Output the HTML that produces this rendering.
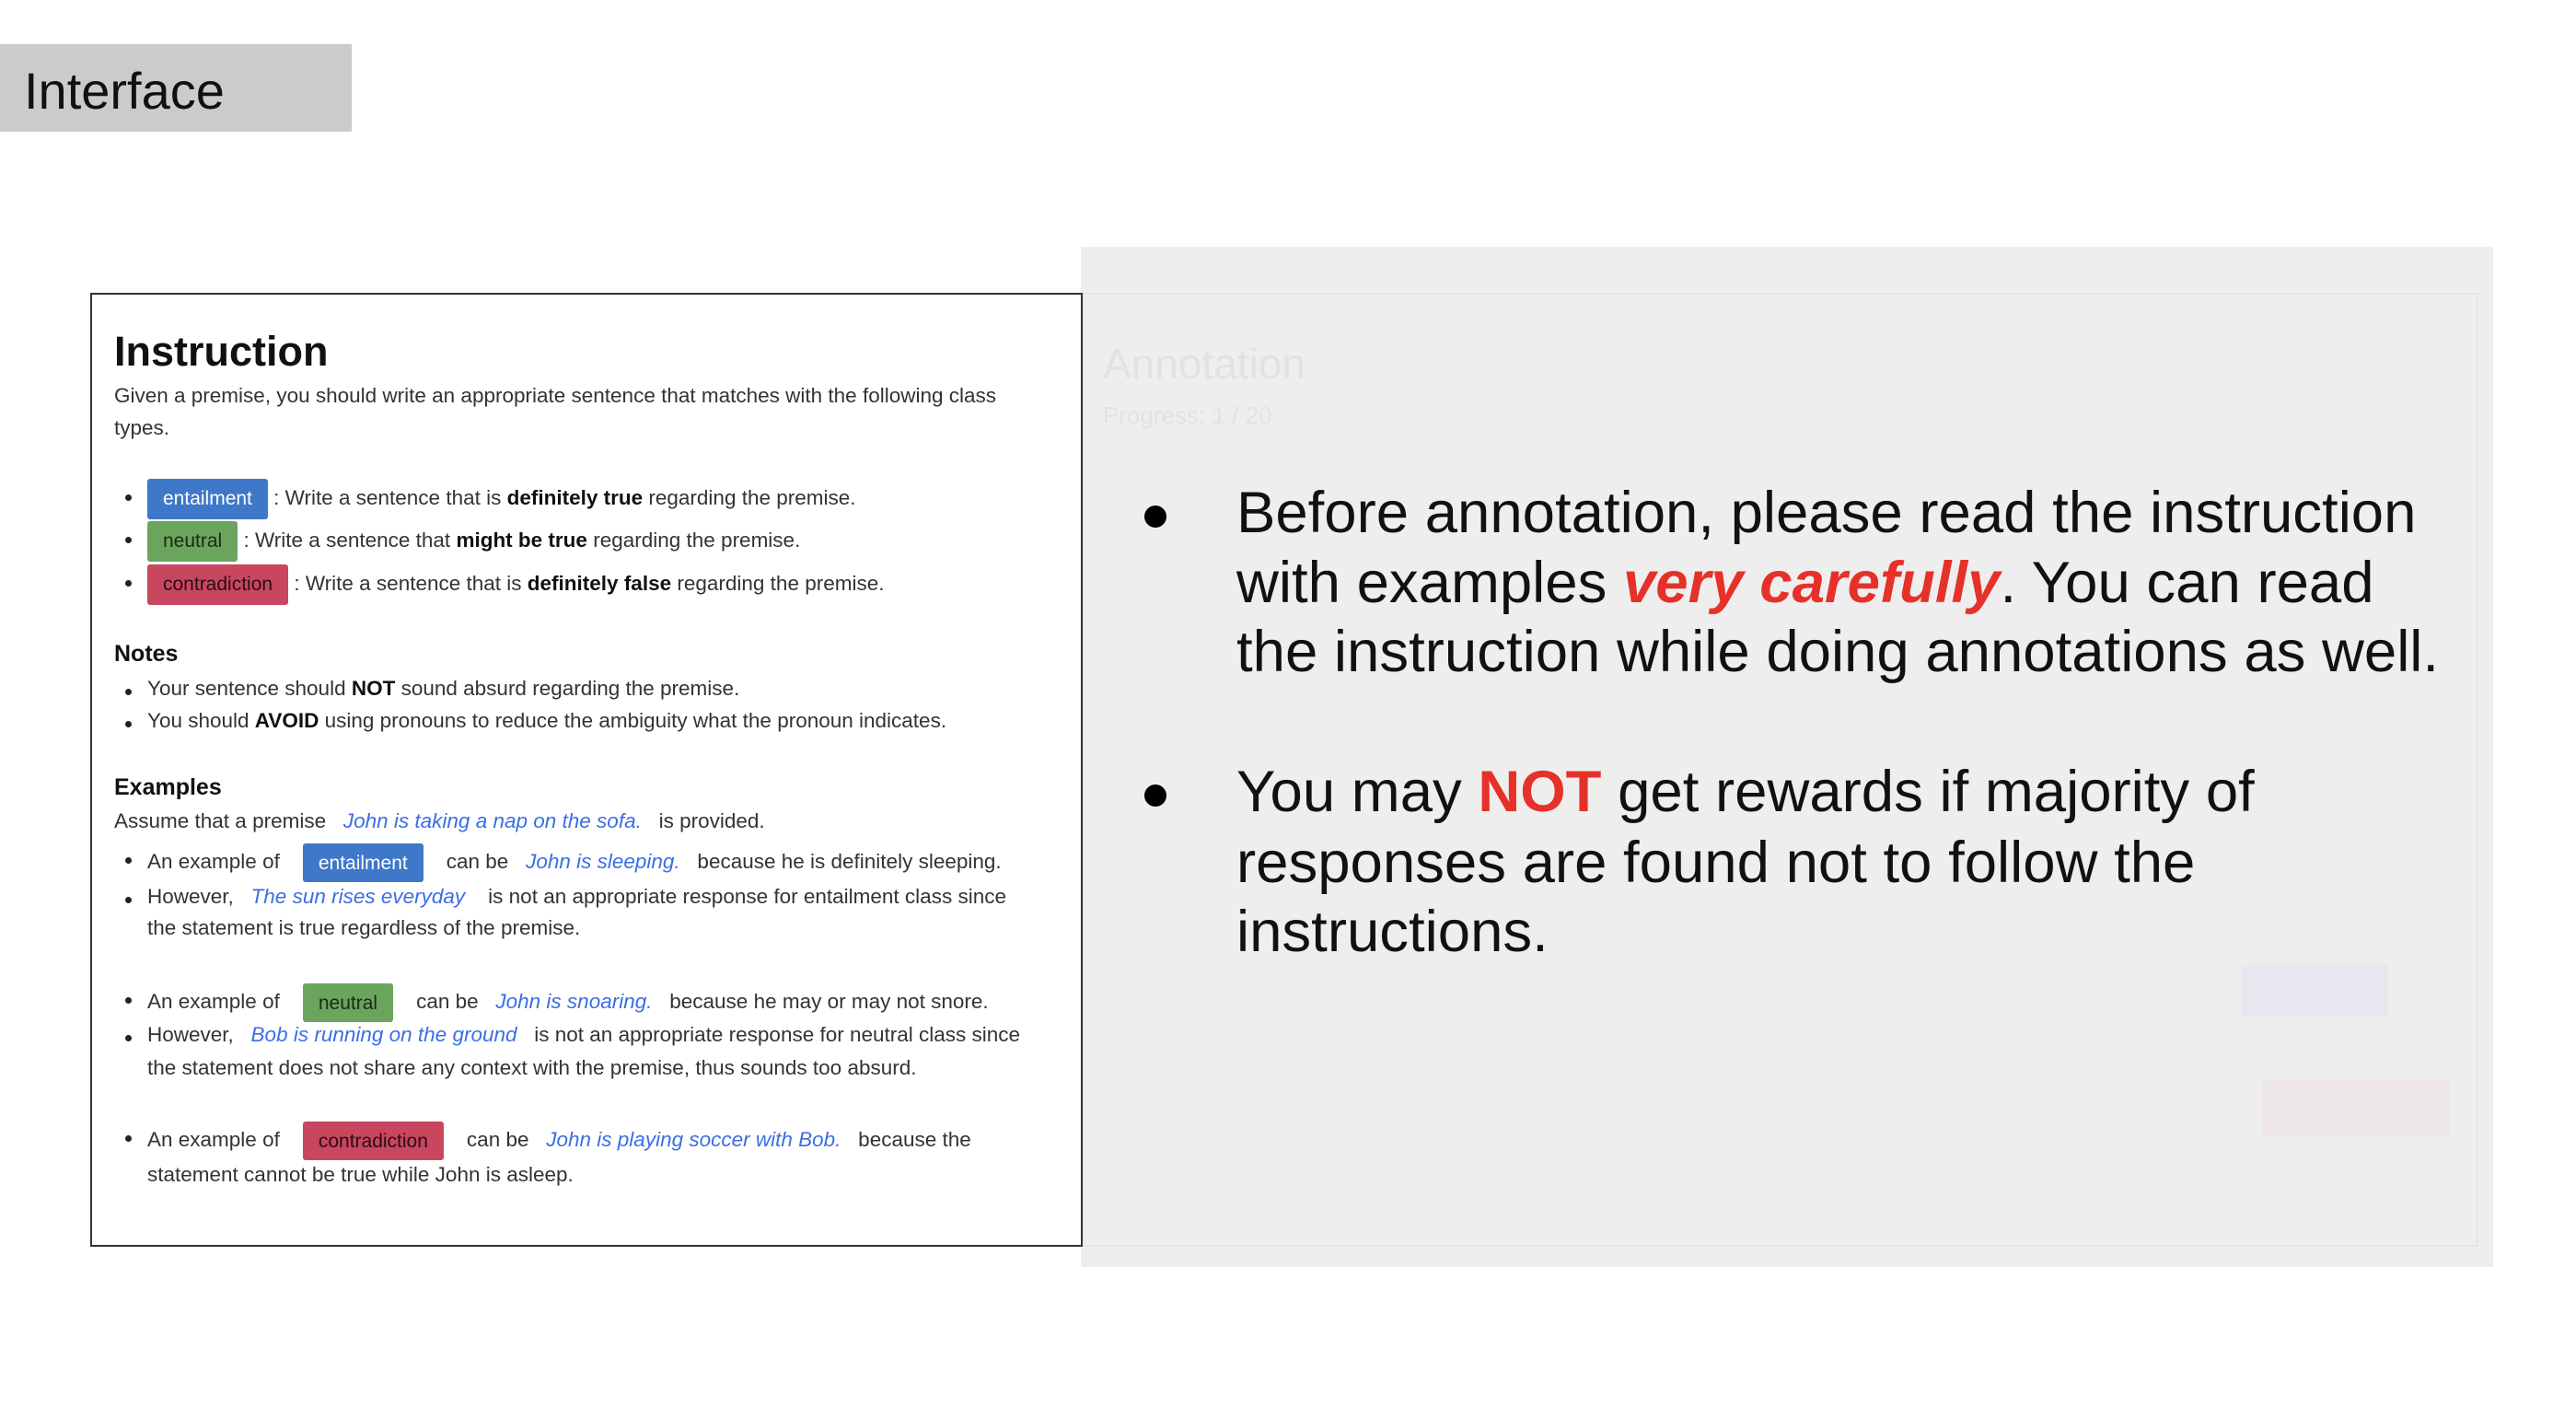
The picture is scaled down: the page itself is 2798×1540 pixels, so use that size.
<!DOCTYPE html>
<html><head><meta charset="utf-8"><style>
body{margin:0;width:2798px;height:1540px;background:#fff;position:relative;overflow:hidden;font-family:"Liberation Sans",sans-serif;}
.abs{position:absolute;white-space:nowrap;}
#tag{left:0;top:48px;width:382px;height:95px;background:#cbcbcb;}
#tag span{position:absolute;left:26px;top:18px;font-size:56px;color:#111;}
#gray{left:1174px;top:268px;width:1534px;height:1108px;background:#eeeeee;}
#panel{left:98px;top:318px;width:1074px;height:1032px;border:2px solid #333;background:#fff;}
.t{position:absolute;white-space:nowrap;font-size:22.5px;color:#333;line-height:30px;}
.b{color:#111;font-weight:bold;}
.i{color:#3a6ee6;font-style:italic;}
.bd{display:inline-block;padding:0 17px;height:42px;line-height:44px;border-radius:3px;font-size:21px;vertical-align:middle;}
.en{background:#3f77c9;color:#fff;}
.ne{background:#6ba55d;color:#1a2a14;}
.co{background:#c9465f;color:#2a0d12;}
.dot{position:absolute;width:7px;height:7px;border-radius:50%;background:#222;}
.big{position:absolute;white-space:nowrap;font-size:63.5px;color:#111;line-height:76px;}
.bdot{position:absolute;width:24px;height:24px;border-radius:50%;background:#000;}
.red{color:#e6312a;}
</style></head><body>
<div class="abs" id="tag"><span>Interface</span></div>
<div class="abs" id="gray">
 <div class="abs" style="left:2px;top:50px;width:1512px;height:1032px;border:2px solid #e6e6e6"></div>
 <div class="abs" style="left:24px;top:100px;font-size:46px;color:#e2e2e2">Annotation</div>
 <div class="abs" style="left:24px;top:168px;font-size:26px;color:#e2e2e2">Progress: 1 / 20</div>
 <div class="abs" style="left:1260px;top:780px;width:160px;height:55px;background:#e6e7ef"></div>
 <div class="abs" style="left:1282px;top:905px;width:204px;height:60px;background:#ede6e6"></div>
</div>
<div class="abs" id="panel">
 <div class="t" style="left:24px;top:34px;font-size:45px;font-weight:bold;color:#111;line-height:56px">Instruction</div>
 <div class="t" style="left:24px;top:95px">Given a premise, you should write an appropriate sentence that matches with the following class</div>
 <div class="t" style="left:24px;top:130px">types.</div>

 <div class="dot" style="left:36px;top:217px"></div>
 <div class="t" style="left:60px;top:200px"><span class="bd en" style="height:44px">entailment</span> : Write a sentence that is <span class="b">definitely true</span> regarding the premise.</div>
 <div class="dot" style="left:36px;top:263px"></div>
 <div class="t" style="left:60px;top:246px"><span class="bd ne" style="height:44px">neutral</span> : Write a sentence that <span class="b">might be true</span> regarding the premise.</div>
 <div class="dot" style="left:36px;top:310px"></div>
 <div class="t" style="left:60px;top:293px"><span class="bd co" style="height:44px">contradiction</span> : Write a sentence that is <span class="b">definitely false</span> regarding the premise.</div>

 <div class="t" style="left:24px;top:375px;font-size:25px;font-weight:bold;color:#111">Notes</div>
 <div class="dot" style="left:36px;top:428px"></div>
 <div class="t" style="left:60px;top:413px">Your sentence should <span class="b">NOT</span> sound absurd regarding the premise.</div>
 <div class="dot" style="left:36px;top:463px"></div>
 <div class="t" style="left:60px;top:448px">You should <span class="b">AVOID</span> using pronouns to reduce the ambiguity what the pronoun indicates.</div>

 <div class="t" style="left:24px;top:520px;font-size:25px;font-weight:bold;color:#111">Examples</div>
 <div class="t" style="left:24px;top:557px">Assume that a premise &nbsp; <span class="i">John is taking a nap on the sofa.</span> &nbsp; is provided.</div>
 <div class="dot" style="left:36px;top:611px"></div>
 <div class="t" style="left:60px;top:596px">An example of &nbsp;&nbsp; <span class="bd en">entailment</span> &nbsp;&nbsp; can be &nbsp; <span class="i">John is sleeping.</span> &nbsp; because he is definitely sleeping.</div>
 <div class="dot" style="left:36px;top:654px"></div>
 <div class="t" style="left:60px;top:639px">However, &nbsp; <span class="i">The sun rises everyday</span> &nbsp;&nbsp; is not an appropriate response for entailment class since</div>
 <div class="t" style="left:60px;top:673px">the statement is true regardless of the premise.</div>

 <div class="dot" style="left:36px;top:763px"></div>
 <div class="t" style="left:60px;top:748px">An example of &nbsp;&nbsp; <span class="bd ne">neutral</span> &nbsp;&nbsp; can be &nbsp; <span class="i">John is snoaring.</span> &nbsp; because he may or may not snore.</div>
 <div class="dot" style="left:36px;top:804px"></div>
 <div class="t" style="left:60px;top:789px">However, &nbsp; <span class="i">Bob is running on the ground</span> &nbsp; is not an appropriate response for neutral class since</div>
 <div class="t" style="left:60px;top:825px">the statement does not share any context with the premise, thus sounds too absurd.</div>

 <div class="dot" style="left:36px;top:913px"></div>
 <div class="t" style="left:60px;top:898px">An example of &nbsp;&nbsp; <span class="bd co">contradiction</span> &nbsp;&nbsp; can be &nbsp; <span class="i">John is playing soccer with Bob.</span> &nbsp; because the</div>
 <div class="t" style="left:60px;top:941px">statement cannot be true while John is asleep.</div>
</div>

<div class="bdot" style="left:1243px;top:549px"></div>
<div class="big" style="left:1343px;top:519px">Before annotation, please read the instruction</div>
<div class="big" style="left:1343px;top:595px">with examples <span class="red" style="font-style:italic;font-weight:bold">very carefully</span>. You can read</div>
<div class="big" style="left:1343px;top:670px">the instruction while doing annotations as well.</div>
<div class="bdot" style="left:1243px;top:852px"></div>
<div class="big" style="left:1343px;top:822px">You may <span class="red" style="font-weight:bold">NOT</span> get rewards if majority of</div>
<div class="big" style="left:1343px;top:899px">responses are found not to follow the</div>
<div class="big" style="left:1343px;top:974px">instructions.</div>
</body></html>
